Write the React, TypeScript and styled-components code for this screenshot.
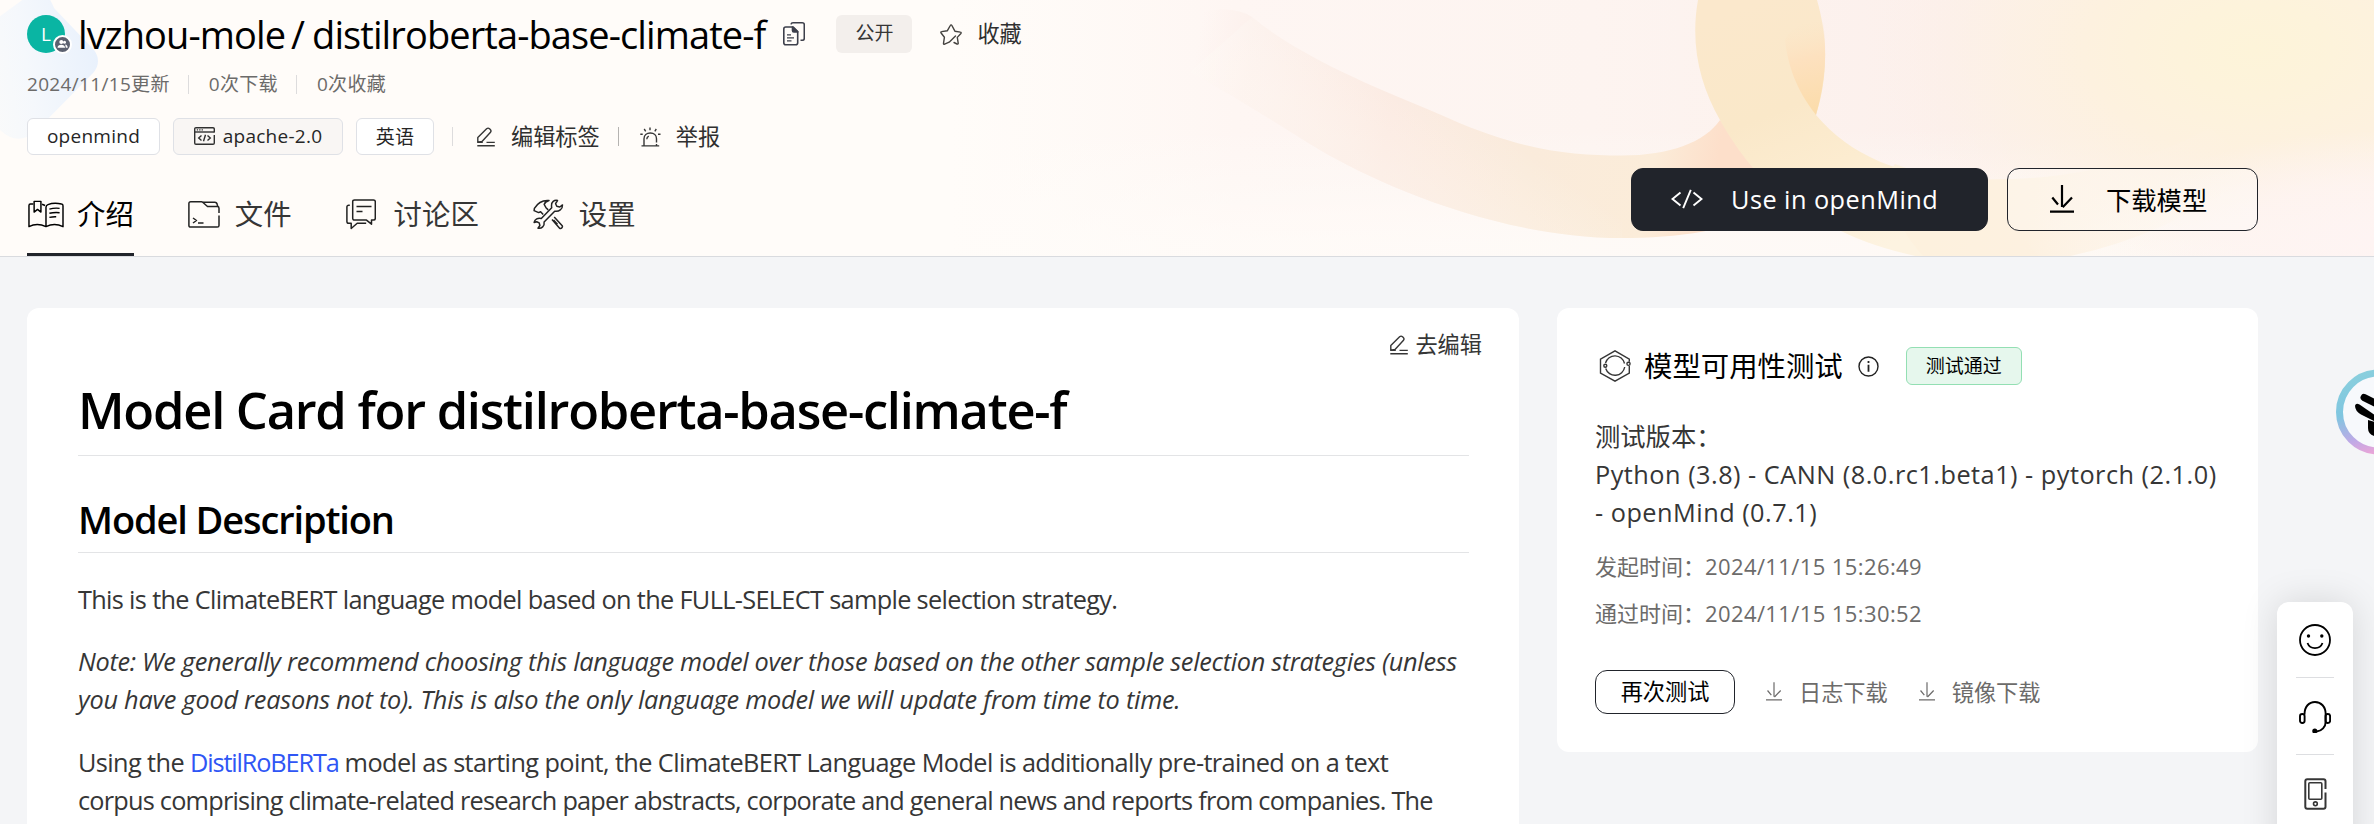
import React from "react";
import styled, { createGlobalStyle } from "styled-components";

const GlobalStyle = createGlobalStyle`
  * { box-sizing: border-box; }
  html, body { margin: 0; height: 824px; overflow: hidden; background: #f4f5f7; }
  body { font-family: "Open Sans", "Noto Sans CJK SC", sans-serif; color: #000; }
  h1, h2, p { margin: 0; }
  svg { display: block; flex: none; }
  button { font-family: inherit; cursor: pointer; }
`;

const Page = styled.div`
  position: relative;
  width: 2374px;
  height: 824px;
  overflow: hidden;
  background: #f4f5f7;
`;

const Header = styled.header`
  position: relative;
  height: 257px;
  padding: 15px 116px 0 27px;
  border-bottom: 1px solid #d9dbdf;
  background: #fffcf9;
  overflow: hidden;
  display: flex;
  flex-direction: column;
`;

const Backdrop = styled.svg`
  position: absolute;
  inset: 0;
`;

const Row = styled.div`
  position: relative;
  display: flex;
  align-items: center;
`;

const TitleRow = styled(Row)`
  height: 38px;
`;

const Avatar = styled.div`
  position: relative;
  width: 38px;
  height: 38px;
  margin-right: 13px;
  border-radius: 50%;
  background: #0ab5a3;
  color: #fff;
  font-size: 19px;
  line-height: 39px;
  text-align: center;
`;

const AvatarBadge = styled.span`
  position: absolute;
  left: 26px;
  top: 20px;
`;

const RepoName = styled.span`
  font-size: 38px;
  line-height: 38px;
  letter-spacing: -0.0238em;
  white-space: nowrap;
`;

const Slash = styled(RepoName)`
  margin: 0 7px 0 6px;
  letter-spacing: 0;
`;

const CopyButton = styled.span`
  margin-left: 18px;
`;

const Visibility = styled.span`
  width: 76px;
  height: 38px;
  margin-left: 31px;
  border-radius: 6px;
  background: #f3efec;
  color: #363636;
  font-size: 19px;
  line-height: 37px;
  text-align: center;
`;

const Action = styled.span<{ $gap: number; $left: number }>`
  display: flex;
  align-items: center;
  gap: ${(p) => p.$gap}px;
  margin-left: ${(p) => p.$left}px;
  color: #303030;
  font-size: 22.2px;
  line-height: 30px;
  white-space: nowrap;
`;

const MetaRow = styled(Row)`
  height: 22px;
  margin-top: 20px;
  color: #6c6b6a;
  font-size: 19px;
  line-height: 22px;
`;

const MetaItem = styled.span`
  letter-spacing: 0.017em;
  white-space: nowrap;
`;

const Divider = styled.i<{ $left: number; $right: number; $color: string }>`
  width: 1px;
  height: 19px;
  margin: 0 ${(p) => p.$right}px 0 ${(p) => p.$left}px;
  background: ${(p) => p.$color};
`;

const TagRow = styled(Row)`
  height: 37px;
  margin-top: 23px;
`;

const Tag = styled.span<{ $width: number; $muted?: boolean }>`
  display: flex;
  align-items: center;
  justify-content: center;
  gap: 8px;
  width: ${(p) => p.$width}px;
  height: 37px;
  margin-right: 13px;
  padding-bottom: 2px;
  border: 1px solid #dfe1e6;
  border-radius: 6px;
  background: ${(p) => (p.$muted ? "#f9f6f4" : "#fff")};
  color: #262626;
  font-size: 19px;
  letter-spacing: 0.014em;
  white-space: nowrap;
`;

const NavRow = styled(Row)`
  height: 101px;
  align-items: stretch;
  justify-content: space-between;
`;

const Tabs = styled.nav`
  display: flex;
  gap: 54px;
`;

const Tab = styled.a<{ $active?: boolean; $gap: number }>`
  display: flex;
  align-items: center;
  gap: ${(p) => p.$gap}px;
  padding-top: 20px;
  border-bottom: 3px solid ${(p) => (p.$active ? "#21242b" : "transparent")};
  color: ${(p) => (p.$active ? "#000" : "#363636")};
  font-size: 28.4px;
  line-height: 36px;
`;

const Buttons = styled.div`
  display: flex;
  gap: 19px;
  margin-top: 13px;
`;

const BigButton = styled.button<{ $dark?: boolean; $width: number; $gap: number; $pad: number }>`
  display: flex;
  align-items: center;
  gap: ${(p) => p.$gap}px;
  width: ${(p) => p.$width}px;
  height: 63px;
  padding: 0 0 1px ${(p) => p.$pad}px;
  border: 1.5px solid #21242b;
  border-radius: 12px;
  background: ${(p) => (p.$dark ? "#21242b" : "rgba(255,255,255,.25)")};
  color: ${(p) => (p.$dark ? "#fff" : "#000")};
  font-size: 25.3px;
  letter-spacing: ${(p) => (p.$dark ? "0.018em" : "0")};
  white-space: nowrap;
`;

const Content = styled.main`
  display: flex;
  align-items: flex-start;
  gap: 38px;
  padding: 51px 0 0 27px;
`;

const Card = styled.section`
  background: #fff;
  border-radius: 12px;
`;

const ModelCard = styled(Card)`
  width: 1492px;
  height: 560px;
  padding: 22px 50px 0 51px;
`;

const EditLink = styled.a`
  display: flex;
  align-items: center;
  justify-content: flex-end;
  gap: 7px;
  height: 30px;
  margin-right: -13px;
  color: #363636;
  font-size: 22.2px;
  line-height: 32px;
`;

const H1 = styled.h1`
  height: 96px;
  padding-top: 23px;
  border-bottom: 1px solid #e3e4e6;
  font-size: 50.6px;
  font-weight: 600;
  line-height: 54px;
  letter-spacing: -0.0248em;
`;

const H2 = styled.h2`
  height: 97px;
  padding-top: 38px;
  margin-bottom: 27px;
  border-bottom: 1px solid #e3e4e6;
  font-size: 38px;
  font-weight: 600;
  line-height: 50px;
  letter-spacing: -0.0295em;
`;

const Paragraph = styled.p<{ $italic?: boolean }>`
  margin-bottom: 25px;
  color: #363636;
  font-size: 25.3px;
  font-style: ${(p) => (p.$italic ? "italic" : "normal")};
  line-height: ${(p) => (p.$italic ? 37.5 : 38)}px;
  white-space: nowrap;
`;

const Line = styled.span<{ $spacing: number }>`
  letter-spacing: ${(p) => p.$spacing}em;
`;

const Link = styled.a`
  color: #2f56f5;
  letter-spacing: -0.045em;
`;

const TestCard = styled(Card)`
  width: 701px;
  height: 444px;
  padding: 38px 0 0 38px;
`;

const TestHeading = styled.div`
  display: flex;
  align-items: center;
  height: 40px;
  padding-left: 4px;
`;

const TestTitle = styled.h2`
  margin: 0 15px 0 13px;
  font-size: 28.4px;
  font-weight: 400;
  line-height: 38px;
`;

const Passed = styled.span`
  width: 116px;
  height: 38px;
  margin-left: 27px;
  border: 1px solid #93dfb3;
  border-radius: 6px;
  background: #e6f7ed;
  font-size: 19px;
  line-height: 36px;
  text-align: center;
`;

const Versions = styled.p`
  margin-top: 31px;
  color: #363636;
  font-size: 25.3px;
  line-height: 38px;
  letter-spacing: 0.0192em;
  white-space: nowrap;
`;

const VersionLabel = styled.span`
  letter-spacing: 0;
`;

const Times = styled.div`
  display: flex;
  flex-direction: column;
  gap: 13px;
  margin-top: 18px;
`;

const Time = styled.div`
  display: flex;
  color: #6c6b6a;
  font-size: 22px;
  line-height: 34px;
`;

const TimeLabel = styled.span`
  width: 110px;
`;

const TimeValue = styled.span`
  letter-spacing: 0.018em;
`;

const TestActions = styled.div`
  display: flex;
  align-items: center;
  height: 44px;
  margin-top: 40px;
`;

const RetryButton = styled.button`
  width: 140px;
  height: 44px;
  padding: 0 0 3px;
  border: 1.5px solid #21242b;
  border-radius: 12px;
  background: #fff;
  color: #000;
  font-size: 22.2px;
`;

const Download = styled.a`
  display: flex;
  align-items: center;
  gap: 17px;
  margin-left: 31px;
  padding-bottom: 1px;
  color: #6c6b6a;
  font-size: 22.2px;
`;

const Assistant = styled.div`
  position: absolute;
  left: 2336px;
  top: 369px;
`;

const SidePanel = styled.aside`
  position: absolute;
  left: 2277px;
  top: 602px;
  width: 76px;
  height: 260px;
  padding-top: 22px;
  border-radius: 12px;
  background: #fff;
  box-shadow: 0 0 36px rgba(0, 0, 0, 0.13);
  display: flex;
  flex-direction: column;
  align-items: center;
`;

const PanelRule = styled.hr`
  width: 38px;
  height: 1px;
  margin: 21px 0 23px;
  border: 0;
  background: #dddee1;
`;

const HeaderArt = () => (
  <Backdrop width="2374" height="256" viewBox="0 0 2374 256">
    <defs>
      <linearGradient id="blue" x1="0.1" y1=".6" x2="1" y2="0.45">
        <stop offset="0" stopColor="#f8fafa" stopOpacity=".5" />
        <stop offset=".5" stopColor="#f5f8fc" />
        <stop offset="1" stopColor="#e9f1fc" />
      </linearGradient>
      <linearGradient id="wash" x1="0" x2="1" y1="0" y2="0">
        <stop offset="0" stopColor="#fef8f4" stopOpacity="0" />
        <stop offset=".2" stopColor="#fef6f3" />
        <stop offset=".45" stopColor="#fdf4f0" />
        <stop offset=".7" stopColor="#fcf0ec" />
        <stop offset="1" stopColor="#fdf3e2" />
      </linearGradient>
      <linearGradient id="fade" x1="0" x2="0" y1="0" y2="1">
        <stop offset="0" stopColor="#fffcf9" stopOpacity="0" />
        <stop offset=".5" stopColor="#fffcf9" stopOpacity="0" />
        <stop offset=".95" stopColor="#fffcf9" stopOpacity=".75" />
      </linearGradient>
      <radialGradient id="sun" gradientUnits="userSpaceOnUse" cx="2255" cy="50" r="380" gradientTransform="translate(2255 50) scale(1 .6) translate(-2255 -50)">
        <stop offset="0" stopColor="#fdf4d9" />
        <stop offset=".2" stopColor="#fdf3db" />
        <stop offset=".45" stopColor="#fdf1df" />
        <stop offset="1" stopColor="#fcefe6" stopOpacity="0" />
      </radialGradient>
      <radialGradient id="pink" gradientUnits="userSpaceOnUse" cx="2374" cy="240" r="260" gradientTransform="translate(2374 240) scale(1 .42) translate(-2374 -240)">
        <stop offset="0" stopColor="#fef4f3" />
        <stop offset=".5" stopColor="#fef4f2" stopOpacity=".8" />
        <stop offset="1" stopColor="#fef4f3" stopOpacity="0" />
      </radialGradient>
      <linearGradient id="tail" gradientUnits="userSpaceOnUse" x1="1195" y1="60" x2="1720" y2="150">
        <stop offset="0" stopColor="#fdf0ec" stopOpacity="0" />
        <stop offset=".1" stopColor="#fcf0eb" stopOpacity=".9" />
        <stop offset=".38" stopColor="#fbe9e0" />
        <stop offset=".65" stopColor="#faebdb" />
        <stop offset=".88" stopColor="#fbecd9" />
        <stop offset="1" stopColor="#fddfca" />
      </linearGradient>
      <linearGradient id="tailFade" gradientUnits="userSpaceOnUse" x1="1500" y1="130" x2="1440" y2="215">
        <stop offset="0" stopColor="#fffcf9" stopOpacity="0" />
        <stop offset="1" stopColor="#fffaf5" stopOpacity=".35" />
      </linearGradient>
      <linearGradient id="loop" gradientUnits="userSpaceOnUse" x1="1760" y1="0" x2="1860" y2="256">
        <stop offset="0" stopColor="#fbe8cc" />
        <stop offset=".4" stopColor="#fae8c9" />
        <stop offset=".65" stopColor="#fcecd0" />
        <stop offset="1" stopColor="#fdf3e1" />
      </linearGradient>
      <linearGradient id="loopEnd" gradientUnits="userSpaceOnUse" x1="1880" y1="170" x2="2240" y2="170">
        <stop offset="0" stopColor="#fdf1dd" />
        <stop offset=".4" stopColor="#fdf1e0" />
        <stop offset="1" stopColor="#fdf2e6" stopOpacity="0" />
      </linearGradient>
      <linearGradient id="fold" gradientUnits="userSpaceOnUse" x1="1795" y1="25" x2="1815" y2="110">
        <stop offset="0" stopColor="#fce5c6" stopOpacity="0" />
        <stop offset=".4" stopColor="#fde1bf" />
        <stop offset="1" stopColor="#fbdcab" />
      </linearGradient>
    </defs>
    <rect x="950" width="1424" height="256" fill="url(#wash)" />
    <rect x="950" width="1424" height="256" fill="url(#fade)" />
    <rect x="1800" width="574" height="256" fill="url(#sun)" />
    <rect x="2080" y="120" width="294" height="136" fill="url(#pink)" />
    <path d="M-60 60 L36 -10 Q46 -12 54 8 L94 50 Q102 61 94 72 L36 131 Q18 147 0 130 L-60 70Z" fill="url(#blue)" />
    <path d="M1200 12 Q1235 5 1252 17 C1310 65 1404 98 1448 118 C1520 150 1570 155.500 1622 155.500 C1670 155.500 1705 142 1720 120 L1790 200 C1740 230 1680 238 1622 238 C1500 238 1380 185 1320 150 C1280 126 1250 105 1190 72Z" fill="url(#tail)" />
    <path d="M1252 17 C1310 65 1404 98 1448 118 C1520 150 1570 155.500 1622 155.500 L1622 238 C1500 238 1380 185 1320 150 C1280 126 1250 105 1190 72Z" fill="url(#tailFade)" />
    <path d="M1698 0 C1690 45 1700 85 1720 120 C1745 165 1780 205 1841 231 Q1875 248 1925 258 L2040 258 L1975 179.500 C1900 178 1850 155 1816 115 C1828 78 1828 38 1817 0Z" fill="url(#loop)" />
    <path d="M1925 258 C1890 220 1880 180 1895 164 C1920 174 1950 179.500 1985 179.500 C2090 180 2160 155 2210 128 L2260 170 Q2160 240 2060 258Z" fill="url(#loopEnd)" />
    <path d="M1785 40 C1788 65 1795 88 1816 115 C1826 80 1827 50 1823 22 Q1795 20 1785 40Z" fill="url(#fold)" />
  </Backdrop>
);

const BadgeIcon = () => (
  <svg width="19" height="19" viewBox="0 0 19 19">
    <circle cx="9.500" cy="9.500" r="8.500" fill="#5b6170" stroke="#fff" strokeWidth="2" />
    <circle cx="8.300" cy="7" r="2" fill="#fff" />
    <circle cx="11.500" cy="7.200" r="1.500" fill="#fff" />
    <path d="M4.500 12.800c0-4 7.600-4 7.600 0zM12.800 12.800h1.900c0-2-1-3-2.500-3.200" fill="#fff" />
  </svg>
);

const CopyIcon = () => (
  <svg width="22" height="24" viewBox="0 0 22 24" fill="none" stroke="#3d3f4b" strokeWidth="1.600" strokeLinejoin="round">
    <path d="M2.800 5h7.400l4.500 4.500v11.200c0 1.200-.8 2-2 2H2.800c-1.200 0-2-.8-2-2V7c0-1.200.8-2 2-2z" />
    <path d="M9.500 5v3.500c0 .9.500 1.400 1.300 1.400h3.900z" fill="#3d3f4b" />
    <path d="M4 12.800h4M4 15.800h7M4 18.800h4.500" strokeWidth="1.300" />
    <path d="M8 2.400C8.200 1.400 8.900.8 10 .8h9.300c1.200 0 2 .8 2 2v13.400c0 1.200-.8 2-2 2h-1.800" />
  </svg>
);

const StarIcon = () => (
  <svg width="22" height="22" viewBox="0 0 22 22" fill="none" stroke="#44423f" strokeWidth="1.400" strokeLinejoin="round" strokeLinecap="round">
    <path d="M14 19.500l3 1.500c.8.300 1.300-.1 1.200-.9l-.9-5.700 3.600-3.900c.5-.6.300-1.300-.5-1.400l-5.500-.9-3-5.700c-.4-.8-1.200-.8-1.600 0L7.400 7.700 1.600 8.600c-.8.100-1 .8-.5 1.400l3.300 4.300-.9 6c-.1.800.4 1.100 1.100.8l4.600-1.900L15.500 13" />
  </svg>
);

const LicenseIcon = () => (
  <svg width="21" height="18" viewBox="0 0 21 18" fill="none" stroke="#303030" strokeWidth="1.400">
    <path d="M20.300 5.500V2c0-.8-.5-1.300-1.300-1.300H2C1.200.7.700 1.200.7 2v14c0 .8.500 1.300 1.300 1.300h17c.8 0 1.300-.5 1.300-1.300V8" />
    <path d="M.7 5h19.600" />
    <path d="M2.800 2.900h1.300M5.200 2.900h1.300M7.600 2.900h1.300" strokeWidth="1.200" />
    <path d="M7.500 8.500L4.700 11l2.800 2.500M13.500 8.500l2.800 2.500-2.800 2.500M11.500 7.800l-2 6.400" />
  </svg>
);

const EditIcon = () => (
  <svg width="18" height="20" viewBox="0 0 18 20" fill="none" stroke="#363636" strokeWidth="1.400" strokeLinejoin="round">
    <path d="M.8 15.300v-4.800L9.600 1.800c1-.9 2-.9 2.900 0l.8.800c.9.900.9 1.900 0 2.900L5 14.400z" />
    <path d="M.8 15.400h5M9.500 15.400h8.300M.3 18.800h17.500" />
  </svg>
);

const AlarmIcon = () => (
  <svg width="21" height="20" viewBox="0 0 21 20" fill="none" stroke="#363636" strokeWidth="1.400">
    <path d="M1.500 18.900h17.700M4 18.500v-6.700C4 8.300 6.700 6 10.300 6s6.200 2.300 6.200 5.800v3.600M16.500 17v1.500M10 .4v2.800M4.200 2l1.500 2.300M16.300 2l-1.500 2.300M.3 7.200h2.400M18 7.200h2.500M6.800 12.200c0-1.500.7-2.400 2-3" />
  </svg>
);

const BookIcon = () => (
  <svg width="37" height="28" viewBox="-1 -.4 38 28.800" fill="none" stroke="#000" strokeWidth="1.500" strokeLinejoin="round">
    <path d="M5.500 3.800H2.500c-1 0-1.500.5-1.500 1.500v21.700c5-2.700 12-2.700 17.500 0 5.500-2.700 12-2.700 17.500 0V5.500c0-1-.5-1.500-1.500-1.700-5-1.200-10.500-.8-14 .6-1.400.6-2 1.400-2 2.600V27" />
    <path d="M6.300 1h7v11l-3.500-2.700L6.300 12zM14.500 4l3 1.300" />
    <path d="M22 9c3.500-1 7-1.300 10.500-.8M22 13.300c3.500-.8 7-1 10.500-.6M22 17.500c2.500-.6 5-.8 7-.7" />
  </svg>
);

const FolderIcon = () => (
  <svg width="32" height="27" viewBox="0 0 32 27" fill="none" stroke="#222" strokeWidth="1.500" strokeLinejoin="round">
    <path d="M31 12V7.200c0-1-.6-1.700-1.700-1.700H19.500L15 1.500c-.4-.4-.9-.7-1.500-.7H2.700C1.500.8.900 1.500.9 2.600v21.800c0 1 .7 1.700 1.800 1.700h26.600c1 0 1.700-.6 1.700-1.700V14.500" />
    <path d="M15 1.200h11.800c1.600 0 2.200.8 2.500 2.500l.4 1.800" />
    <path d="M5 17l3.500 2.500L5 22M10 22h5.500" />
  </svg>
);

const ChatIcon = () => (
  <svg width="30" height="31" viewBox="0 0 30 31" fill="none" stroke="#222" strokeWidth="1.500" strokeLinejoin="round">
    <path d="M8.500.9h19c1.100 0 1.800.7 1.800 1.800v16.600c0 1.100-.7 1.800-1.800 1.800h-2v4.100l-5-4.100h-12c-1.100 0-1.800-.7-1.800-1.800V2.700C6.700 1.600 7.400.9 8.500.9z" />
    <path d="M3.800 6.200H2.700C1.600 6.200.9 6.900.9 8v14.500c0 1.100.7 1.800 1.800 1.800h2.500v5.200l6-5.200h9" />
    <path d="M10.500 7.500h15M10.500 12.500h6" />
  </svg>
);

const ToolsIcon = () => (
  <svg width="31" height="31" viewBox="0 0 31 31" fill="none" stroke="#222" strokeWidth="1.500" strokeLinejoin="round">
    <path d="M24.500 1.500c-3-.8-6.500 1.500-6 5.500l.2 1.800L8.300 19.500c-3.300-1-6.600.8-7.200 4l2.600-.8 2.500 1.200.7 2.600-1.900 2.700c3.600.8 6.800-2.200 6.100-6.200l10.600-10.800c4.300.8 8-2 7.800-6.300l-2.700 2.100-3-.8-1.200-2.500z" />
    <path d="M10.200 15.500L7.600 12.700l-2 .9-4.500-2 .3-2.300C4 5 9 .8 16 1.500c-2.500.8-4.300 2-4.800 4l1.800 3.200 2.200 2.200M19 20.500l7.600 8.800c1.800.9 3.600-1.200 2.400-2.900l-7.800-8.300" />
    <path d="M20.500 21l4 4.200" />
  </svg>
);

const CodeIcon = () => (
  <svg width="32" height="20" viewBox="0 0 32 20" fill="none" stroke="#fff" strokeWidth="1.900">
    <path d="M9.500 3.500L1.500 10l8 6.500M22.500 3.500l8 6.500-8 6.500M19.800.8l-7.600 18.400" />
  </svg>
);

const DownloadIcon = ({ width, height, stroke, color }: { width: number; height: number; stroke: number; color: string }) => (
  <svg width={width} height={height} viewBox="0 0 24 28" fill="none" stroke={color} strokeWidth={stroke}>
    <path d="M12 0v22M2.300 12.500l5.700 7M22 12.500l-9.300 9.800M0 26.600h24" />
  </svg>
);

const HexIcon = () => (
  <svg width="32" height="32" viewBox="0 0 32 32" fill="none" stroke="#363636" strokeWidth="1.400">
    <path d="M1.500 20.500V9.200L16 .9l14.300 8.300v2.500M30.300 16v7L16 31.200 1.500 23v-2.500" />
    <path d="M6.500 13A9.800 9.800 0 0 1 25.500 13.500M25.700 17a9.800 9.800 0 0 1-19 1.500" />
    <circle cx="6.300" cy="15.700" r="1.500" />
    <circle cx="29.500" cy="13.800" r="1.600" />
  </svg>
);

const InfoIcon = () => (
  <svg width="21" height="21" viewBox="0 0 21 21" fill="none" stroke="#222" strokeWidth="1.400">
    <circle cx="10.500" cy="10.500" r="9.500" />
    <path d="M10.500 8.800v7M10.500 5v2" strokeWidth="1.800" />
  </svg>
);

const SmileIcon = () => (
  <svg width="32" height="32" viewBox="0 0 32 32" fill="none" stroke="#000" strokeWidth="1.800">
    <circle cx="16" cy="16" r="15" />
    <circle cx="9.500" cy="12" r="1.700" fill="#000" stroke="none" />
    <circle cx="22.800" cy="12" r="1.700" fill="#000" stroke="none" />
    <path d="M8.500 19c2.500 6.800 12.500 6.800 15 0" />
  </svg>
);

const HeadsetIcon = () => (
  <svg width="32" height="32" viewBox="0 0 32 32" fill="none" stroke="#000" strokeWidth="1.900">
    <path d="M5.500 13.500C5.500 5.500 10 1 16 1s10.700 4.500 10.700 12.500v7c0 5.500-4 9.500-9 10" />
    <rect x="1" y="13" width="4.600" height="9" rx="2.200" />
    <rect x="26.500" y="13" width="4.600" height="9" rx="2.200" />
    <circle cx="15.800" cy="30" r="1.600" fill="#000" />
  </svg>
);

const PhoneIcon = () => (
  <svg width="23" height="32" viewBox="0 0 23 32" fill="none" stroke="#363636" strokeWidth="2">
    <path d="M21.500 11V3.200c0-1.300-.7-2-2-2H3.300c-1.300 0-2 .7-2 2v25.600c0 1.300.7 2 2 2h16.200c1.300 0 2-.7 2-2V14.500" />
    <rect x="4.800" y="4.800" width="13" height="16.500" rx="1" strokeWidth="1.600" />
    <circle cx="11.400" cy="25.800" r="1.900" strokeWidth="1.600" />
  </svg>
);

const AssistantIcon = () => (
  <svg width="86" height="86" viewBox="0 0 86 86">
    <defs>
      <linearGradient id="ring" x1=".2" y1="0" x2=".5" y2="1">
        <stop offset="0" stopColor="#8acfdd" />
        <stop offset=".45" stopColor="#7fc6e0" />
        <stop offset=".8" stopColor="#c0a9e6" />
        <stop offset="1" stopColor="#e8a5d8" />
      </linearGradient>
    </defs>
    <circle cx="42.500" cy="43" r="39" fill="#f7f9fc" stroke="url(#ring)" strokeWidth="7" />
    <path d="M33 31l6 2v5z" fill="#aaa" />
    <path d="M28 28.500l14 7" stroke="#000" strokeWidth="7" strokeLinecap="round" />
    <path d="M19 36.500Q20 33.500 23.500 35.500L40 47V53L25 45.500Q19 42 19 36.500Z" fill="#000" />
    <path d="M32 51L42 54V67H38Q32 65 32 59Z" fill="#000" />
  </svg>
);

export default function App() {
  return (
    <Page>
      <GlobalStyle />
      <Header>
        <HeaderArt />
        <TitleRow>
          <Avatar>
            L
            <AvatarBadge><BadgeIcon /></AvatarBadge>
          </Avatar>
          <RepoName>lvzhou-mole</RepoName>
          <Slash>/</Slash>
          <RepoName>distilroberta-base-climate-f</RepoName>
          <CopyButton><CopyIcon /></CopyButton>
          <Visibility>公开</Visibility>
          <Action $gap={15} $left={28}><StarIcon />收藏</Action>
        </TitleRow>
        <MetaRow>
          <MetaItem>2024/11/15更新</MetaItem>
          <Divider $left={18} $right={20} $color="#dddcdd" />
          <MetaItem>0次下载</MetaItem>
          <Divider $left={18} $right={20} $color="#dddcdd" />
          <MetaItem>0次收藏</MetaItem>
        </MetaRow>
        <TagRow>
          <Tag $width={133}>openmind</Tag>
          <Tag $width={170} $muted><LicenseIcon />apache-2.0</Tag>
          <Tag $width={78}>英语</Tag>
          <Divider $left={5} $right={24} $color="#dddcdd" />
          <Action $gap={16} $left={0}><EditIcon />编辑标签</Action>
          <Divider $left={18} $right={21} $color="#b5b3b1" />
          <Action $gap={15} $left={0}><AlarmIcon />举报</Action>
        </TagRow>
        <NavRow>
          <Tabs>
            <Tab $active $gap={13}><BookIcon />介绍</Tab>
            <Tab $gap={15}><FolderIcon />文件</Tab>
            <Tab $gap={18}><ChatIcon />讨论区</Tab>
            <Tab $gap={15}><ToolsIcon />设置</Tab>
          </Tabs>
          <Buttons>
            <BigButton $dark $width={357} $gap={28} $pad={39}><CodeIcon />Use in openMind</BigButton>
            <BigButton $width={251} $gap={32} $pad={42}>
              <DownloadIcon width={24} height={28} stroke={2.2} color="#000" />下载模型
            </BigButton>
          </Buttons>
        </NavRow>
      </Header>
      <Content>
        <ModelCard>
          <EditLink><EditIcon />去编辑</EditLink>
          <H1>Model Card for distilroberta-base-climate-f</H1>
          <H2>Model Description</H2>
          <Paragraph>
            <Line $spacing={-0.0264}>This is the ClimateBERT language model based on the FULL-SELECT sample selection strategy.</Line>
          </Paragraph>
          <Paragraph $italic>
            <Line $spacing={-0.0122}>
              Note: We generally recommend choosing this language model over those based on the other sample selection strategies (unless
            </Line>
            <br />
            <Line $spacing={-0.0097}>you have good reasons not to). This is also the only language model we will update from time to time.</Line>
          </Paragraph>
          <Paragraph>
            <Line $spacing={-0.0238}>
              Using the <Link>DistilRoBERTa</Link> model as starting point, the ClimateBERT Language Model is additionally pre-trained on a text
            </Line>
            <br />
            <Line $spacing={-0.0308}>
              corpus comprising climate-related research paper abstracts, corporate and general news and reports from companies. The
            </Line>
          </Paragraph>
        </ModelCard>
        <TestCard>
          <TestHeading>
            <HexIcon />
            <TestTitle>模型可用性测试</TestTitle>
            <InfoIcon />
            <Passed>测试通过</Passed>
          </TestHeading>
          <Versions>
            <VersionLabel>测试版本：</VersionLabel>
            <br />
            Python (3.8) - CANN (8.0.rc1.beta1) - pytorch (2.1.0)
            <br />
            - openMind (0.7.1)
          </Versions>
          <Times>
            <Time><TimeLabel>发起时间：</TimeLabel><TimeValue>2024/11/15 15:26:49</TimeValue></Time>
            <Time><TimeLabel>通过时间：</TimeLabel><TimeValue>2024/11/15 15:30:52</TimeValue></Time>
          </Times>
          <TestActions>
            <RetryButton>再次测试</RetryButton>
            <Download><DownloadIcon width={16} height={19} stroke={1.8} color="#6c6b6a" />日志下载</Download>
            <Download><DownloadIcon width={16} height={19} stroke={1.8} color="#6c6b6a" />镜像下载</Download>
          </TestActions>
        </TestCard>
      </Content>
      <Assistant><AssistantIcon /></Assistant>
      <SidePanel>
        <SmileIcon />
        <PanelRule />
        <HeadsetIcon />
        <PanelRule />
        <PhoneIcon />
      </SidePanel>
    </Page>
  );
}
